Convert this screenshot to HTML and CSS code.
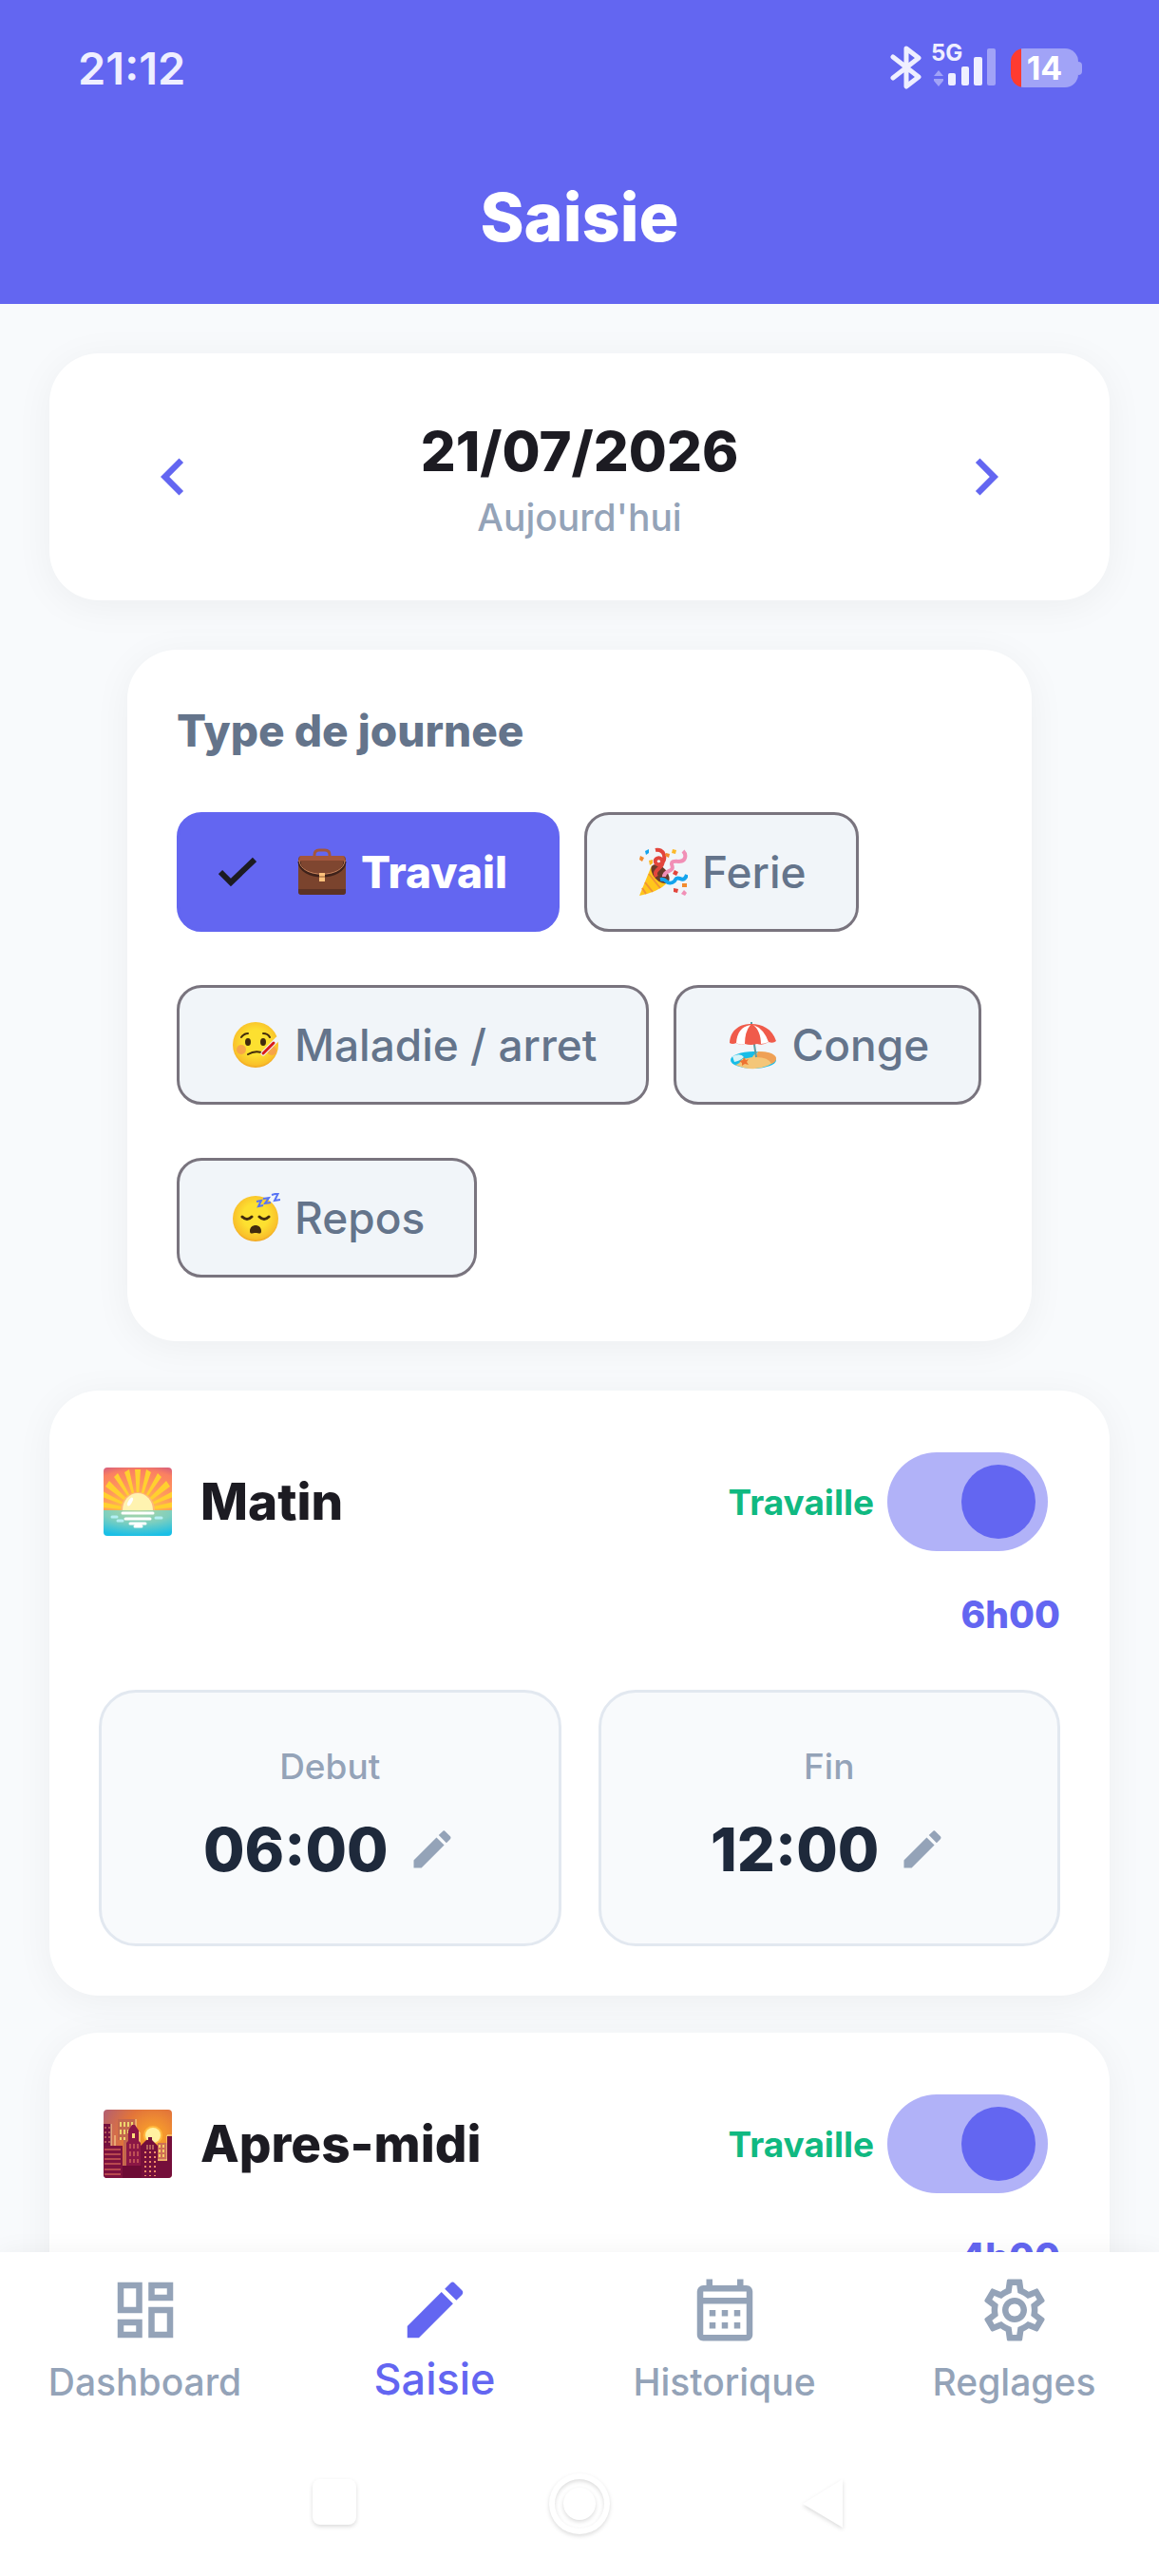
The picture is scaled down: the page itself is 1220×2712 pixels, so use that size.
FILE: index.html
```html
<!DOCTYPE html>
<html lang="fr">
<head>
  <meta charset="UTF-8" />
  <meta name="viewport" content="width=device-width" />
  <title>Saisie</title>
  <link rel="stylesheet" href="styles.css">
</head>
<body>
  <svg class="defs" aria-hidden="true">
    <defs>
      <symbol id="pencil" viewBox="0 0 24 24">
        <path d="M3 17.25V21h3.75L17.81 9.94l-3.75-3.75L3 17.25zM20.71 7.04c.39-.39.39-1.02 0-1.41l-2.34-2.34a1 1 0 0 0-1.41 0l-1.83 1.83 3.75 3.75 1.83-1.83z" fill="currentColor"/>
      </symbol>
      <radialGradient id="face" cx=".5" cy=".45" r=".55">
        <stop offset=".5" stop-color="#fde030"/>
        <stop offset=".9" stop-color="#f9c02b"/>
        <stop offset="1" stop-color="#f0a41f"/>
      </radialGradient>
    </defs>
  </svg>

  <header class="header">
    <div class="status">
      <span class="clock">21:12</span>
      <div class="status-icons">
        <svg width="34" height="48" viewBox="0 0 34 48" fill="none" stroke="#efefff" stroke-width="5" stroke-linejoin="round" stroke-linecap="round">
          <path d="M3 13 30 34 17 44V4l13 10L3 35"/>
        </svg>
        <div class="network">
          <span class="network-type">5G</span>
          <svg width="68" height="40" viewBox="0 0 68 40">
            <path d="M8 23l5 6H3zM8 40l5-6v-2H3v2z" fill="#a1a3f7"/>
            <rect x="18" y="26" width="8" height="13" rx="2" fill="#efefff"/>
            <rect x="32" y="19" width="8" height="20" rx="2" fill="#efefff"/>
            <rect x="45" y="9" width="9" height="30" rx="2" fill="#efefff"/>
            <rect x="59" y="0" width="9" height="39" rx="2" fill="#a1a3f7"/>
          </svg>
        </div>
        <div class="battery">14</div>
      </div>
    </div>
    <h1>Saisie</h1>
  </header>

  <main class="content">
    <section class="card date-card">
      <button class="arrow" type="button" aria-label="Jour precedent">
        <svg width="78" height="78" viewBox="0 0 24 24"><path d="M15.41 7.41 14 6l-6 6 6 6 1.41-1.41L10.83 12z" fill="currentColor"/></svg>
      </button>
      <div class="date">
        <h2>21/07/2026</h2>
        <p>Aujourd'hui</p>
      </div>
      <button class="arrow" type="button" aria-label="Jour suivant">
        <svg width="78" height="78" viewBox="0 0 24 24"><path d="M8.59 16.59 10 18l6-6-6-6-1.41 1.41L13.17 12z" fill="currentColor"/></svg>
      </button>
    </section>

    <section class="card type-card">
      <h2>Type de journee</h2>
      <div class="chips">
        <button class="chip selected" type="button" aria-pressed="true">
          <svg class="check" viewBox="0 0 40 32"><path d="M2 16l11 11L38 3" fill="none" stroke="#1c1b22" stroke-width="6"/></svg>
          <svg class="emoji" viewBox="0 0 52 52">
            <path d="M18 11V8q0-5 5-5h6q5 0 5 5v3" fill="none" stroke="#a3563c" stroke-width="3"/>
            <rect x="1" y="9" width="50" height="41" rx="4" fill="#7a432d"/>
            <path d="M1 44h50v3q0 3-3 3H4q-3 0-3-3z" fill="#5c3225"/>
            <path d="M3 9h46l2 6H1z" fill="#a3563c"/>
            <path d="M2 14c0 22 48 22 48 0" fill="#7f4630"/>
            <path d="M2 15c1 20 47 20 48 0" fill="none" stroke="#3f221a" stroke-width="3"/>
            <path d="M2 14c1 19 47 19 48 0" fill="none" stroke="#c4815b" stroke-width="1"/>
            <rect x="23" y="27" width="6" height="9" fill="#ffc27c"/><path d="M23 31h6" stroke="#8a5630"/>
          </svg>
          <span>Travail</span>
        </button>
        <button class="chip" type="button" aria-pressed="false">
          <svg class="emoji" viewBox="0 0 52 52">
            <path d="M14 19 1 51q20-4 30-14z" fill="#ffc61c"/>
            <path d="m11 28 12 15M7 37l8 10M4 43l4 6" stroke="#f19534" stroke-width="2"/>
            <ellipse cx="23" cy="28" rx="7" ry="12" transform="rotate(-42 23 28)" fill="#6b3a2a"/>
            <path d="M19 31c-5-8 9-9 6-17-2-5-9-2-7 2 2 5 11 1 9-8-1-4-5-6-9-5" fill="none" stroke="#e2453c" stroke-width="4"/>
            <path d="M27 31c0-8 12-4 8-13-1-7 12 1 14-7 1-3 0-5-2-7" fill="none" stroke="#f18fb6" stroke-width="4"/>
            <path d="M23 34c8-2 5 6 13 3 5-2 1-6 8-4 4 2 6-1 7-4" fill="none" stroke="#14a4ed" stroke-width="4"/>
            <path d="M7 4l4-2v4l-3 2z" fill="#14a4ed"/>
            <path d="M2 9l4 2-2 4-3-2zM29 6l4 1-1 4-4-2zM46 38h5v4h-5z" fill="#f28b2e"/>
            <path d="M11 14l4-1v4l-3 2zM36 2l4 1-1 4-4-1z" fill="#fcb928"/>
            <path d="M38 24l4 2-2 4-4-2zM37 43l5 1-1 4-4-1z" fill="#e2453c"/>
            <path d="M48 45l3 3-2 3-4-2z" fill="#f18fb6"/>
          </svg>
          <span>Ferie</span>
        </button>
        <button class="chip" type="button" aria-pressed="false">
          <svg class="emoji" viewBox="0 0 52 52">
            <circle cx="26" cy="26" r="24" fill="url(#face)"/>
            <circle cx="11" cy="31" r="5" fill="#f69a50" opacity=".8"/><circle cx="43" cy="32" r="5" fill="#f69a50" opacity=".8"/>
            <ellipse cx="18" cy="23" rx="3" ry="4" fill="#422b0d"/><ellipse cx="34" cy="23" rx="3" ry="4" fill="#422b0d"/>
            <path d="M11 18q3-4 7-4M34 14q5 0 7 4M18 36q8-5 17-1" fill="none" stroke="#422b0d" stroke-width="2" stroke-linecap="round"/>
            <path d="M34 35 49 20" stroke="#f2f4f6" stroke-width="5" stroke-linecap="round"/>
            <path d="M34 35 45 24" stroke="#d81b1b" stroke-width="3" stroke-linecap="round"/>
          </svg>
          <span>Maladie / arret</span>
        </button>
        <button class="chip" type="button" aria-pressed="false">
          <svg class="emoji" viewBox="0 0 52 52">
            <ellipse cx="27" cy="42" rx="24" ry="9" fill="#17bde8"/>
            <path d="M8 47q18 8 34 1 9-4 9-8-2-6-18-7-6 3-7 6l-11 2q-2 5-7 6z" fill="#f4c678"/>
            <path d="M32 33q17 0 19 7 0 4-5 6-3-7-16-7z" fill="#efa055"/>
            <path d="M5 38q9-4 12 1-4 4-10 5" fill="#d8f3f7"/>
            <path d="m17 39 2 3 3-1-2 3 2 3-4-1-3 2v-3l-3-2 4-1z" fill="#ee7432"/>
            <path d="M25 2v4l5 33" fill="none" stroke="#5b9ea6" stroke-width="2"/>
            <path d="M2 24C3 9 14 4 25 4s22 5 26 18q-3 3-8 1-6 4-12 2-7 2-13 0-5 2-9-1-4 2-7 0z" fill="#f05b4b"/>
            <path d="M24 5C14 7 10 13 9 24q4 3 9 1 0-13 6-20zM27 5c5 4 8 11 8 20q4 0 8-2Q38 9 27 5z" fill="#fff"/>
          </svg>
          <span>Conge</span>
        </button>
        <button class="chip" type="button" aria-pressed="false">
          <svg class="emoji" viewBox="0 0 52 52">
            <circle cx="26" cy="27" r="24" fill="url(#face)"/>
            <path d="M12 25q5 5 10 0M30 25q5 5 10 0" fill="none" stroke="#422b0d" stroke-width="3" stroke-linecap="round"/>
            <path d="M20 40c0-8 12-8 12 0 0 4-3 2-6 2s-6 2-6-2z" fill="#422b0d"/>
            <path d="M27 9l5-1-3 6 5-1M34 6l6-1-4 6 6-1M43 2l7-2-4 8 6-1" fill="none" stroke="#5874f5" stroke-width="2"/>
          </svg>
          <span>Repos</span>
        </button>
      </div>
    </section>

    <section class="card period">
      <div class="period-head">
        <svg class="scene" viewBox="0 0 72 72">
          <defs>
            <radialGradient id="sky" cx=".5" cy="1" r="1.1"><stop offset="0" stop-color="#ffd43b"/><stop offset=".5" stop-color="#ff9a5c"/><stop offset=".85" stop-color="#fb8061"/><stop offset="1" stop-color="#d8607c"/></radialGradient>
            <radialGradient id="sea" cx=".5" cy="0" r="1"><stop offset="0" stop-color="#b3d6a0"/><stop offset=".5" stop-color="#7fcfbe"/><stop offset="1" stop-color="#19bfe6"/></radialGradient>
            <clipPath id="frame"><rect width="72" height="72" rx="4"/></clipPath>
          </defs>
          <g clip-path="url(#frame)">
            <path fill="url(#sky)" d="M0 0h72v46H0z"/>
            <path d="M36 45-2 42v-6zM36 45-1 31v-6zM36 45 2 20l4-6zM36 45 11 10l4-4zM36 45 22 5l5-3zM36 45 33 2h6zM36 45 45 2l5 3zM36 45 57 6l4 4zM36 45 66 14l4 6zM36 45 73 25v6zM36 45 74 36v6z" fill="#ffd02f"/>
            <path d="M18 45a18 19 0 0 1 36 0z" fill="#ffb877"/>
            <path d="M20 45a16 18 0 0 1 32 0z" fill="#fff3b0"/>
            <ellipse cx="28" cy="36" rx="2" ry="5" transform="rotate(30 28 36)" fill="#fff"/>
            <path fill="url(#sea)" d="M0 45h72v27H0z"/>
            <path d="M20 48h32M23 54h26M28 59h16M33 62h7" stroke="#fff" stroke-width="3" stroke-linecap="round"/>
            <path d="M9 52h5M15 56h5M55 53h6" stroke="#b4eff4" stroke-width="3" stroke-linecap="round"/>
          </g>
        </svg>
        <h2>Matin</h2>
        <label for="matin">Travaille</label>
        <input class="switch" id="matin" type="checkbox" role="switch" checked>
      </div>
      <p class="total">6h00</p>
      <div class="times">
        <button class="time" type="button">
          <span class="time-label">Debut</span>
          <span class="time-value">06:00 <svg width="52" height="52"><use href="#pencil"/></svg></span>
        </button>
        <button class="time" type="button">
          <span class="time-label">Fin</span>
          <span class="time-value">12:00 <svg width="52" height="52"><use href="#pencil"/></svg></span>
        </button>
      </div>
    </section>

    <section class="card period">
      <div class="period-head">
        <svg class="scene" viewBox="0 0 72 72">
          <defs>
            <radialGradient id="dusk" cx=".73" cy=".4" r=".9"><stop offset="0" stop-color="#ffab27"/><stop offset=".5" stop-color="#e2743a"/><stop offset="1" stop-color="#a85a7d"/></radialGradient>
          </defs>
          <g clip-path="url(#frame)">
            <path fill="url(#dusk)" d="M0 0h72v72H0z"/>
            <circle cx="52" cy="27" r="10" fill="#ffb93f"/><circle cx="52" cy="27" r="8" fill="#fff1a1"/>
            <path d="M15 10h19v50H21V32h-6z" fill="#c3674d"/><path d="M34 10v14h4v34" fill="none" stroke="#ffe291" stroke-width="1"/>
            <path d="M18 13v19M22 13v19M26 13v12M30 13v6" stroke="#edd66d" stroke-width="2" stroke-dasharray="5 3"/>
            <path d="M57 35h10v18H57z" fill="#cf7056"/><path d="M57 53h10V27h5" fill="none" stroke="#ffe291" stroke-width="1"/>
            <path d="M59 37v14M63 37v14" stroke="#f5cd65" stroke-width="2" stroke-dasharray="3 2"/>
            <path d="M0 15h8v24H0z" fill="#75103e"/><path d="M8 15v23M12 27v11" stroke="#ffdf96" stroke-width="1"/>
            <path d="M2 18v20M6 18v20" stroke="#f49b72" stroke-width="1" stroke-dasharray="2 3"/>
            <path d="M24 60V35l2-2V22l4-6h3l4 6v11l2 2v25z" fill="#8b1745"/><path d="M30 25h3v5h-3z" fill="#ffe27a"/>
            <path d="M28 36v20M32 36v20M36 36v20" stroke="#f08a67" stroke-width="1" stroke-dasharray="5 3"/>
            <path d="M67 28h5v44H39V38l6-6h2v-3h4v3l6 6v16h10z" fill="#750f3b"/>
            <path d="M46 37v5M49 37v5M52 37v5" stroke="#f3b07b" stroke-width="1"/>
            <path d="M44 44v26M49 44v26M54 44v26" stroke="#f08a67" stroke-width="2" stroke-dasharray="2 3"/>
            <path d="M0 59h40v13H0z" fill="#6d0b35"/>
            <path d="M0 38h20v34H0z" fill="#7d123e"/>
            <path d="M1 42h17M1 47h17M1 52h17M1 57h17M1 63h17M1 68h17" stroke="#f37e61" stroke-width="1"/>
          </g>
        </svg>
        <h2>Apres-midi</h2>
        <label for="apres-midi">Travaille</label>
        <input class="switch" id="apres-midi" type="checkbox" role="switch" checked>
      </div>
      <p class="total">4h00</p>
    </section>
  </main>

  <footer class="footer">
    <nav class="tabs">
      <a href="#dashboard">
        <svg width="78" height="78" viewBox="0 0 24 24"><path d="M19 5v2h-4V5h4M9 5v6H5V5h4m10 8v6h-4v-6h4M9 17v2H5v-2h4M21 3h-8v6h8V3zM11 3H3v10h8V3zm10 8h-8v10h8V11zm-10 4H3v6h8v-6z" fill="currentColor"/></svg>
        <span>Dashboard</span>
      </a>
      <a href="#saisie" class="active" aria-current="page">
        <svg width="78" height="78"><use href="#pencil"/></svg>
        <span>Saisie</span>
      </a>
      <a href="#historique">
        <svg width="78" height="78" viewBox="0 0 24 24"><path d="M19 4h-1V2h-2v2H8V2H6v2H5a2 2 0 0 0-2 2v14c0 1.100.9 2 2 2h14c1.100 0 2-.9 2-2V6c0-1.100-.9-2-2-2zm0 16H5V10h14v10zm0-12H5V6h14v2zM9 14H7v-2h2v2zm4 0h-2v-2h2v2zm4 0h-2v-2h2v2zm-8 4H7v-2h2v2zm4 0h-2v-2h2v2zm4 0h-2v-2h2v2z" fill="currentColor"/></svg>
        <span>Historique</span>
      </a>
      <a href="#reglages">
        <svg width="78" height="78" viewBox="0 0 24 24"><path d="M19.430 12.980c.040-.320.070-.640.070-.980s-.030-.660-.070-.980l2.110-1.650c.190-.150.240-.420.120-.640l-2-3.460c-.090-.160-.260-.250-.440-.250-.060 0-.120.010-.170.030l-2.490 1c-.520-.400-1.080-.730-1.690-.980l-.380-2.650C14.460 2.180 14.250 2 14 2h-4c-.250 0-.460.180-.490.420l-.380 2.650c-.610.250-1.170.590-1.690.980l-2.490-1c-.060-.020-.120-.030-.180-.030-.170 0-.340.090-.430.250l-2 3.460c-.130.220-.070.490.120.640l2.110 1.650c-.040.320-.070.650-.070.980s.030.660.070.980l-2.110 1.650c-.190.150-.240.420-.120.640l2 3.460c.090.160.260.250.440.250.060 0 .120-.010.170-.030l2.490-1c.520.400 1.080.730 1.690.980l.380 2.650c.030.240.240.420.490.420h4c.250 0 .460-.180.490-.420l.380-2.650c.610-.250 1.170-.590 1.690-.980l2.490 1c.060.020.120.030.180.030.170 0 .340-.090.430-.250l2-3.460c.120-.220.070-.490-.120-.640l-2.110-1.650zm-1.980-1.710c.040.310.050.520.050.730 0 .210-.020.430-.050.730l-.140 1.130.890.700 1.080.840-.700 1.210-1.270-.510-1.040-.420-.900.680c-.430.320-.840.560-1.250.730l-1.060.430-.160 1.130-.200 1.350h-1.400l-.190-1.350-.160-1.130-1.060-.430c-.430-.180-.830-.410-1.230-.710l-.910-.700-1.060.430-1.270.510-.700-1.210 1.080-.840.890-.700-.140-1.130c-.030-.310-.050-.540-.050-.740s.020-.430.050-.730l.140-1.130-.890-.700-1.080-.840.700-1.210 1.270.510 1.040.420.900-.680c.430-.320.840-.560 1.250-.730l1.060-.430.160-1.130.200-1.350h1.390l.190 1.350.160 1.130 1.060.430c.430.180.830.410 1.230.710l.910.700 1.060-.430 1.270-.510.700 1.210-1.070.850-.890.700.140 1.130zM12 8c-2.210 0-4 1.790-4 4s1.790 4 4 4 4-1.790 4-4-1.790-4-4-4zm0 6c-1.100 0-2-.9-2-2s.9-2 2-2 2 .9 2 2-.9 2-2 2z" fill="currentColor"/></svg>
        <span>Reglages</span>
      </a>
    </nav>
    <div class="system-bar">
      <svg width="70" height="70" viewBox="0 0 70 70"><rect x="12" y="7" width="46" height="48" rx="8"/></svg>
      <svg width="70" height="70" viewBox="0 0 70 70"><path d="M35 1a32 32 0 1 0 0 64 32 32 0 0 0 0-64zm0 6a26 26 0 1 1 0 52 26 26 0 0 1 0-52z"/><circle cx="35" cy="33" r="17"/></svg>
      <svg width="70" height="70" viewBox="0 0 70 70"><path d="M54 7v51L12 33z"/></svg>
    </div>
  </footer>
</body>
</html>
```

FILE: styles.css
```css
* {
  box-sizing: border-box;
}
body {
  font-family: Inter, "Noto Sans", sans-serif;
  background: #f8fafc;
  color: #1c1b22;
  margin: 0;
  height: 100vh;
  display: flex;
  flex-direction: column;
}
h1, h2, p {
  margin: 0;
}
button {
  font-family: inherit;
  color: inherit;
  background: none;
  border: 0;
  padding: 0;
  cursor: pointer;
}
svg {
  display: block;
  flex-shrink: 0;
}
.defs {
  position: absolute;
  width: 0;
  height: 0;
}

/* header */
.header {
  background: #6366f1;
  color: #fff;
}
.status {
  display: flex;
  justify-content: space-between;
  align-items: center;
  height: 138px;
  padding: 4px 85px 0 82px;
}
.clock {
  font-size: 47px;
  font-weight: 600;
  color: #efefff;
}
.status-icons {
  display: flex;
  align-items: center;
}
.network {
  position: relative;
  margin: 0 16px 0 9px;
}
.network-type {
  position: absolute;
  left: 0;
  top: -5px;
  font-size: 24px;
  line-height: 20px;
  font-weight: 700;
  color: #efefff;
}
.battery {
  position: relative;
  width: 71px;
  border-radius: 14px;
  background: linear-gradient(to right, #ff3b30 11px, #a1a3f7 11px);
  font-size: 34px;
  line-height: 41px;
  font-weight: 700;
  text-align: center;
}
.battery::after {
  content: "";
  position: absolute;
  left: 100%;
  top: 14px;
  width: 4px;
  height: 14px;
  border-radius: 0 4px 4px 0;
  background: #a1a3f7;
}
.header h1 {
  font-size: 70px;
  line-height: 182px;
  font-weight: 800;
  text-align: center;
}

/* cards */
.content {
  flex: 1;
  min-height: 0;
  overflow-y: auto;
  scrollbar-width: none;
  padding: 52px;
}
.card {
  background: #fff;
  border-radius: 52px;
  padding: 52px;
  box-shadow: 0 6px 40px rgba(0, 0, 0, 0.05);
}
.date-card {
  display: flex;
  justify-content: space-between;
  align-items: center;
  margin-bottom: 52px;
}
.arrow {
  display: flex;
  align-items: center;
  justify-content: center;
  width: 156px;
  height: 156px;
  color: #6366f1;
}
.date {
  text-align: center;
}
.date h2 {
  font-size: 58px;
  line-height: 86px;
  font-weight: 800;
}
.date p {
  font-size: 39px;
  line-height: 54px;
  font-weight: 500;
  color: #94a3b8;
}

/* day type */
.type-card {
  margin: 0 82px 52px;
  padding-bottom: 67px;
}
.type-card h2 {
  font-size: 46px;
  line-height: 67px;
  margin-bottom: 52px;
  font-weight: 800;
  color: #64748b;
}
.chips {
  display: flex;
  flex-wrap: wrap;
  gap: 56px 26px;
}
.chip {
  display: flex;
  align-items: center;
  gap: 15px;
  padding: 30px 52px 30px 54px;
  border: 3px solid #79747e;
  border-radius: 26px;
  background: #f1f5f9;
  color: #64748b;
  font-size: 46px;
  line-height: 60px;
  font-weight: 500;
}
.chip.selected {
  background: #6366f1;
  border-color: #6366f1;
  color: #fff;
  font-weight: 800;
  padding-left: 41px;
}
.check {
  width: 40px;
  height: 32px;
  margin-right: 28px;
}
.emoji {
  width: 52px;
  height: 52px;
}

/* periods */
.period {
  margin-bottom: 39px;
}
.period-head {
  display: flex;
  align-items: center;
  height: 130px;
  padding: 0 13px 0 5px;
}
.scene {
  width: 72px;
  height: 72px;
}
.period-head h2 {
  flex: 1;
  margin-left: 30px;
  font-size: 53px;
  font-weight: 800;
}
.period-head label {
  font-size: 37px;
  font-weight: 700;
  color: #10b981;
}
.switch {
  appearance: none;
  width: 169px;
  height: 104px;
  margin: 0 0 0 14px;
  padding: 13px;
  border-radius: 52px;
  background: #b1b2f8;
  cursor: pointer;
}
.switch::before {
  content: "";
  display: block;
  width: 78px;
  height: 78px;
  border-radius: 50%;
  background: #6366f1;
}
.switch:checked::before {
  margin-left: auto;
}
.total {
  margin: 28px 0 53px;
  font-size: 39px;
  line-height: 52px;
  font-weight: 800;
  text-align: right;
  color: #6366f1;
}
.times {
  display: grid;
  grid-template-columns: 1fr 1fr;
  gap: 39px;
}
.time {
  padding: 50px 0 54px;
  border: 3px solid #e2e8f0;
  border-radius: 39px;
  background: #f8fafc;
}
.time-label {
  display: block;
  margin-bottom: 14px;
  font-size: 37px;
  line-height: 56px;
  font-weight: 500;
  color: #94a3b8;
}
.time-value {
  display: flex;
  align-items: center;
  justify-content: center;
  gap: 20px;
  font-size: 63px;
  line-height: 90px;
  font-weight: 800;
  color: #1e293b;
}
.time-value svg {
  color: #94a3b8;
}

/* bottom navigation */
.footer {
  position: relative;
  background: #fff;
  box-shadow: 0 0 26px rgba(0, 0, 0, 0.05);
}
.tabs {
  display: grid;
  grid-template-columns: repeat(4, 1fr);
  padding-top: 22px;
}
.tabs a {
  display: flex;
  flex-direction: column;
  align-items: center;
  font-size: 39px;
  line-height: 74px;
  font-weight: 500;
  color: #94a3b8;
  text-decoration: none;
}
.tabs a.active {
  font-size: 45px;
  line-height: 68px;
  color: #6366f1;
}
.system-bar {
  display: flex;
  justify-content: center;
  gap: 188px;
  padding: 58px 0 39px;
}
.system-bar svg {
  fill: #fff;
  filter: drop-shadow(0 2px 2px rgba(0, 0, 0, 0.14));
}
```
